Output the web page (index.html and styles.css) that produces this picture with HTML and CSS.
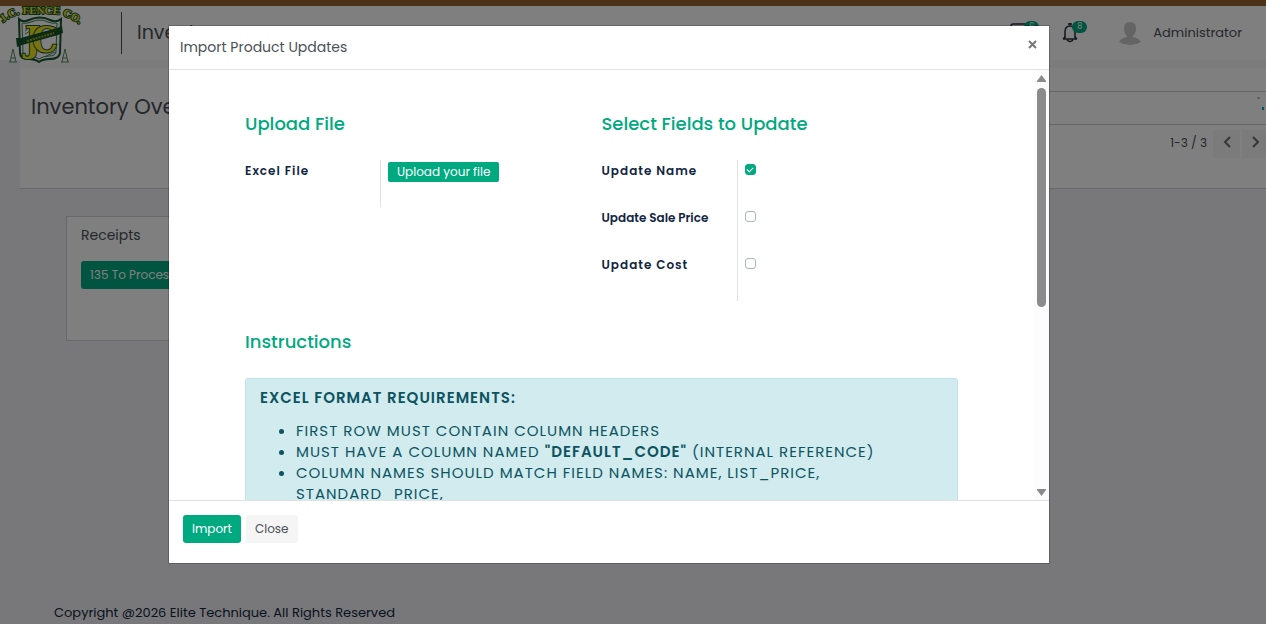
FILE: index.html
```html
<!DOCTYPE html>
<html lang="en">
<head>
  <meta charset="UTF-8">
  <title>Inventory Overview</title>
  <link rel="stylesheet" href="styles.css">
</head>
<body>
  <header class="topbar">
    <a class="logo" href="#" aria-label="J.C. Fence Co.">
      <svg width="82" height="58" viewBox="0 0 82 58">
        <defs>
          <path id="arc" d="M3 17 Q12 9 22 8 L56 8 Q66 9 82 20"/>
        </defs>
        <!-- shield -->
        <path d="M19 13 Q23 17 29 14 Q40 9 50 14 Q56 17 61 13 L60 47 Q59 53 50 53 Q43 53 39 56 Q35 53 28 53 Q20 53 20 47 Z" fill="#fff" stroke="#14552c" stroke-width="2"/>
        <path d="M22 17 Q27 18 31 16 Q40 12 48 16 Q53 18 57 17 L56 46 Q55 50 49 50 Q43 50 39 53 Q35 50 29 50 Q23 50 23 46 Z" fill="none" stroke="#3c7d55"/>
        <text class="logo-jc" x="25" y="46">J</text>
        <text class="logo-jc" x="32" y="46">C</text>
        <path d="M46 50 L55 46 M25 28 L30 25 M25 25 L29 22" stroke="#4a8a62"/>
        <!-- ribbon -->
        <path d="M16 32 L21 32 L57 22 L62 20 L63 27 L58 29 L22 39 L17 41 Z" fill="#14552c"/>
        <path d="M27 35 L54 27" stroke="#a5a51c" stroke-width="2" stroke-dasharray="2 1"/>
        <!-- side posts -->
        <path d="M10 56 L13 43 L16 56 M11 52 H16 M9 56 H17 M62 56 L65 43 L68 56 M62 52 H67 M61 56 H69" fill="none" stroke="#5b8a6a"/>
        <text class="logo-arc"><textPath href="#arc">J.C. FENCE CO.</textPath></text>
      </svg>
    </a>
    <span class="app-name">Inventory</span>
    <div class="topbar-right">
      <button class="icon-btn" aria-label="Messages">
        <svg width="20" height="20" viewBox="0 0 20 20" fill="none" stroke="#222e3c" stroke-width="1.500"><path d="M1 17 V3 Q1 1 3 1 H17 Q19 1 19 3 V15 Q19 17 17 17 Z"/></svg>
        <span class="badge">6</span>
      </button>
      <button class="icon-btn" aria-label="Activities">
        <svg width="16" height="20" viewBox="0 0 16 20" fill="none" stroke="#222e3c" stroke-width="1.500"><path d="M8 0 V2 M6 1 H10 M1 16 H15 M3 15 V9 Q3 3 8 3 Q13 3 13 9 V15 M1 16 Q3 15 3 13 M15 16 Q13 15 13 13 M5 17 Q8 20 11 17"/></svg>
        <span class="badge">8</span>
      </button>
      <button class="user-btn">
        <svg width="22" height="24" viewBox="0 0 22 24" fill="#c8c8c8"><path d="M5 7 Q5 1 11 1 Q17 1 17 7 Q17 12 14 15 V16 Q20 17 22 21 Q17 24 11 24 Q5 24 0 21 Q2 17 8 16 V15 Q5 12 5 7 Z"/></svg>
        <span>Administrator</span>
      </button>
    </div>
  </header>

  <main class="page">
    <section class="control-panel">
      <h1>Inventory Overview</h1>
      <div class="search-side">
        <div class="search-box">
          <input class="search-input" type="search" aria-label="Search">
          <svg width="10" height="16" viewBox="0 0 10 16" fill="none"><path d="M1 1 H4" stroke="#7d8a92"/><path d="M7 10 V13" stroke="#00a8c8" stroke-width="2"/></svg>
        </div>
        <div class="pager">
          <span>1-3 / 3</span>
          <button aria-label="Previous"><svg width="8" height="12" viewBox="0 0 8 12"><path d="M7 1 L2 6 L7 11"/></svg></button>
          <button aria-label="Next"><svg width="8" height="12" viewBox="0 0 8 12"><path d="M1 1 L6 6 L1 11"/></svg></button>
        </div>
      </div>
    </section>

    <article class="card">
      <h2>Receipts</h2>
      <button class="btn btn-primary">135 To Process</button>
    </article>
  </main>

  <footer class="copyright">Copyright @2026 Elite Technique. All Rights Reserved</footer>

  <div class="backdrop">
    <div class="modal" role="dialog" aria-labelledby="modal-title">
      <div class="modal-header">
        <h4 id="modal-title">Import Product Updates</h4>
        <button class="modal-close" aria-label="Close dialog">
          <svg width="9" height="9" viewBox="0 0 9 9"><path d="M1 1 L8 8 M8 1 L1 8"/></svg>
        </button>
      </div>

      <div class="modal-body">
        <div class="form">
          <div class="groups">
            <div class="group">
              <h3>Upload File</h3>
              <div class="field">
                <label class="wide" for="excel">Excel File</label>
                <div class="value"><button class="upload" id="excel">Upload your file</button></div>
              </div>
            </div>
            <div class="group">
              <h3>Select Fields to Update</h3>
              <div class="field">
                <label class="wide" for="upd-name">Update Name</label>
                <div class="value"><input type="checkbox" id="upd-name" checked></div>
              </div>
              <div class="field">
                <label for="upd-price">Update Sale Price</label>
                <div class="value"><input type="checkbox" id="upd-price"></div>
              </div>
              <div class="field">
                <label class="wide" for="upd-cost">Update Cost</label>
                <div class="value"><input type="checkbox" id="upd-cost"></div>
              </div>
            </div>
          </div>

          <h3>Instructions</h3>
          <div class="alert">
            <p><strong>Excel Format Requirements:</strong></p>
            <ul>
              <li>First row must contain column headers</li>
              <li>Must have a column named <strong>"default_code"</strong> (Internal Reference)</li>
              <li>Column names should match field names: name, list_price, standard_price,</li>
            </ul>
          </div>
        </div>
        <div class="scrollbar">
          <svg width="9" height="7" viewBox="0 0 9 7"><path d="M4.500 0 L9 6 V7 H0 V6 Z"/></svg>
          <div class="thumb"></div>
          <svg class="down" width="9" height="7" viewBox="0 0 9 7"><path d="M4.500 7 L9 1 V0 H0 V1 Z"/></svg>
        </div>
      </div>

      <div class="modal-footer">
        <button class="btn btn-primary">Import</button>
        <button class="btn btn-light">Close</button>
      </div>
    </div>
  </div>
</body>
</html>
```
FILE: styles.css
```css
* {
  box-sizing: border-box;
}

body {
  margin: 0;
  height: 100vh;
  display: flex;
  flex-direction: column;
  overflow: hidden;
  font-family: Poppins, "Noto Sans", sans-serif;
  font-size: 13px;
  color: #495057;
  background-color: #f1f1f4;
}

h1, h2, h3, h4, p {
  margin: 0;
}

button {
  font-family: inherit;
  font-size: 13px;
  padding: 0;
  border: none;
  background: none;
  color: inherit;
  cursor: pointer;
}

/* top bar */
.topbar {
  position: relative;
  z-index: 1;
  display: flex;
  align-items: center;
  height: 60px;
  border-top: 6px solid #966633;
  background-color: #fff;
}

.logo {
  align-self: flex-start;
  width: 121px;
}

.logo svg {
  display: block;
  overflow: visible;
}

.logo-arc {
  font: bold 11px "Liberation Serif", serif;
  fill: #f2e61e;
  stroke: #14552c;
  stroke-width: 2px;
  paint-order: stroke;
}

.logo-jc {
  font: bold condensed 36px "DejaVu Serif Condensed", "DejaVu Serif", serif;
  fill: #f2e61e;
  stroke: #14552c;
  stroke-width: 2px;
  paint-order: stroke;
}

.app-name {
  padding: 6px 15px;
  border-left: 1px solid #495057;
  font-size: 19px;
  line-height: 30px;
}

.topbar-right {
  display: flex;
  align-items: center;
  margin-left: auto;
  padding-right: 24px;
}

.icon-btn {
  position: relative;
  height: 20px;
  margin-right: 32px;
}

.icon-btn + .icon-btn {
  margin-right: 41px;
}

.badge {
  position: absolute;
  top: -2px;
  right: -9px;
  width: 15px;
  border-radius: 6px;
  background-color: #00a980;
  color: #fff;
  font-size: 8px;
  line-height: 12px;
}

.user-btn {
  display: flex;
  align-items: center;
  gap: 12px;
  font-size: 13px;
}

/* page */
.page {
  flex: 1;
}

.control-panel {
  display: flex;
  justify-content: space-between;
  height: 129px;
  margin-left: 20px;
  padding: 31px 0 0 11px;
  border-bottom: 1px solid #d0d0d0;
  background: linear-gradient(#f8f8f9 8px, #fff 8px);
}

.control-panel h1 {
  font-size: 21px;
  font-weight: 400;
  line-height: 32px;
}

.search-side {
  width: 50%;
}

.search-box {
  display: flex;
  align-items: flex-start;
  height: 34px;
  padding-top: 5px;
  border-top: 1px solid #ccc;
  border-bottom: 1px solid #ccc;
}

.search-input {
  flex: 1;
  border: none;
  background: none;
}

.pager {
  display: flex;
  justify-content: flex-end;
  gap: 2px;
  margin: 5px -3px 0 0;
  font-size: 12px;
  line-height: 26px;
}

.pager span {
  margin-right: 4px;
}

.pager button {
  width: 27px;
  height: 28px;
  background-color: #f6f6f6;
}

.pager path {
  fill: none;
  stroke: #6c6c6c;
  stroke-width: 2;
}

.card {
  width: 320px;
  height: 125px;
  margin: 27px 0 0 66px;
  padding: 8px 14px;
  border: 1px solid #ced4da;
  background-color: #fff;
}

.card h2 {
  margin-bottom: 15px;
  font-size: 14px;
  font-weight: 400;
  line-height: 21px;
}

.copyright {
  padding: 0 54px;
  color: #12263f;
  font-size: 13px;
  line-height: 22px;
}

.btn {
  height: 28px;
  padding: 0 9px;
  border-radius: 3px;
  font-size: 12px;
  line-height: 26px;
}

.btn-primary {
  background-color: #00a980;
  color: #fff;
}

.btn-light {
  background-color: #f5f5f5;
}

/* dialog */
.backdrop {
  position: fixed;
  inset: 0;
  z-index: 10;
  display: flex;
  justify-content: center;
  align-items: flex-start;
  padding: 25px 48px 0 0;
  background-color: rgba(0, 0, 0, 0.5);
}

.modal {
  display: flex;
  flex-direction: column;
  width: 882px;
  max-height: calc(100vh - 85px);
  border: 1px solid rgba(0, 0, 0, 0.2);
  background-color: #fff;
  background-clip: padding-box;
}

.modal-header {
  display: flex;
  flex-shrink: 0;
  justify-content: space-between;
  align-items: center;
  height: 44px;
  padding: 0 12px 6px 11px;
  border-bottom: 1px solid #dee2e6;
}

.modal-header h4 {
  padding-top: 5px;
  font-size: 14px;
  font-weight: 400;
}

.modal-close {
  line-height: 9px;
}

.modal-close path {
  stroke: #777;
  stroke-width: 2;
}

.modal-body {
  display: flex;
  flex: 1;
  min-height: 0;
  overflow: hidden;
}

.form {
  flex: 1;
  padding: 40px 76px;
}

.groups {
  display: grid;
  grid-template-columns: 1fr 1fr;
  margin-bottom: 27px;
}

h3 {
  margin-bottom: 22px;
  color: #00a980;
  font-size: 18px;
  font-weight: 500;
  line-height: 28px;
}

.field {
  display: grid;
  grid-template-columns: 135px 1fr;
  height: 47px;
}

.field label {
  padding-top: 2px;
  color: #12263f;
  font-size: 12px;
  font-weight: 600;
  line-height: 18px;
}

.field .wide {
  letter-spacing: 1px;
}

.value {
  display: flex;
  align-items: flex-start;
  padding: 2px 7px;
  border-left: 1px solid #dee2e6;
}

.upload {
  height: 20px;
  padding: 0 9px;
  border-radius: 2px;
  background-color: #00a980;
  color: #fff;
  font-size: 12px;
  line-height: 18px;
}

input[type="checkbox"] {
  appearance: none;
  width: 11px;
  height: 11px;
  margin: 2px 0;
  border: 1px solid #adb5bd;
  border-radius: 3px;
  background-color: #fff;
}

input[type="checkbox"]:checked {
  display: flex;
  justify-content: center;
  border-color: #00a980;
  background-color: #00a980;
}

input[type="checkbox"]:checked::before {
  content: "";
  width: 5px;
  height: 3px;
  margin-top: 2px;
  border: solid #fff;
  border-width: 0 0 1px 1px;
  transform: rotate(-45deg);
}

.alert {
  height: 230px;
  padding: 8px 14px;
  border: 1px solid #bee5eb;
  border-radius: 3px;
  background-color: #d1ebef;
  color: #0c5460;
  font-size: 15px;
  letter-spacing: 1px;
  line-height: 21px;
  text-transform: uppercase;
}

.alert strong {
  font-weight: 600;
}

.alert ul {
  margin: 12px 0 0;
  padding: 0 0 0 36px;
}

.scrollbar {
  display: flex;
  flex-direction: column;
  align-items: center;
  width: 15px;
  padding: 5px 0 4px;
  background-color: #fcfcfc;
}

.scrollbar svg {
  fill: #8b8b8b;
}

.scrollbar .down {
  margin-top: auto;
}

.thumb {
  width: 9px;
  height: 52%;
  margin-top: 6px;
  border-radius: 5px;
  background-color: #8b8b8b;
}

.modal-footer {
  display: flex;
  flex-shrink: 0;
  gap: 5px;
  height: 63px;
  padding: 14px;
  border-top: 1px solid #dee2e6;
}
```
